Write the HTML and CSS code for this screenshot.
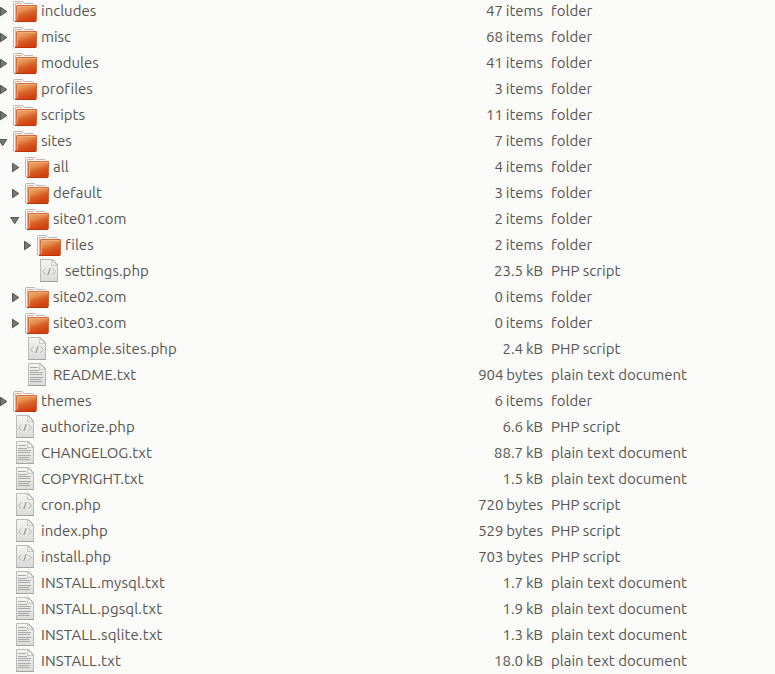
FILE: index.html
```
<!DOCTYPE html>
<html lang="en">
<head>
<meta charset="utf-8">
<title>Files</title>
<link rel="stylesheet" href="styles.css">
</head>
<body>
<svg class="defs" aria-hidden="true">
  <defs>
    <linearGradient id="orange" x1="0" y1="0" x2="0.45" y2="1">
      <stop offset="0" stop-color="#efb878"/><stop offset=".42" stop-color="#e38a4a"/>
      <stop offset=".62" stop-color="#d9622a"/><stop offset="1" stop-color="#d0400f"/>
    </linearGradient>
    <linearGradient id="paper" x1="0" y1="0" x2="0" y2="1">
      <stop offset="0" stop-color="#f4f4f3"/><stop offset="1" stop-color="#dadada"/>
    </linearGradient>
    <symbol id="folder" viewBox="0 0 24 26">
      <path d="M.5 23V4.500Q.5 3.500 1.500 3.500H9.500L11.500 5.500H19.500Q20.500 5.500 20.500 6.500V23Z" fill="#f7f6f5" stroke="#b9b9b7"/>
      <path d="M2.500 22V5.500H9" fill="none" stroke="#e9ae85"/>
      <path d="M3.500 22V8Q3.500 7.500 4 7.500H23.500V22Q23.500 23.500 22 23.500H2Q3.500 23 3.500 22Z" fill="url(#orange)" stroke="#d8693a"/>
      <path d="M4.500 21.500V8.500H22.500" fill="none" stroke="#f1b381" stroke-opacity=".75"/>
      <path d="M2 23.500H23" stroke="#bd3408"/>
    </symbol>
    <symbol id="page" viewBox="0 0 24 26">
      <path d="M3.500 1.500H15.500L20.500 6.500V23.500H3.500Z" fill="url(#paper)" stroke="#b9b9b8"/>
      <path d="M3 23.500H21" stroke="#a2a2a1"/>
      <path d="M14.500 1.500Q15.500 4 14.500 7.500Q18 6.500 20.500 7.500Z" fill="#fff" stroke="#bcbcba"/>
    </symbol>
    <symbol id="php" viewBox="0 0 24 26">
      <use href="#page"/>
      <path d="M8.500 10.500L5.500 13.500L8.500 16.500M15.500 10.500L18.500 13.500L15.500 16.500" fill="none" stroke="#b0b0af"/>
      <path d="M13.200 10L10.800 17" fill="none" stroke="#858584"/>
    </symbol>
    <symbol id="text" viewBox="0 0 24 26">
      <use href="#page"/>
      <path d="M5 5.500H13M5 8.500H14M5 10.500H18M5 12.500H17M5 15.500H18M5 17.500H16M5 19.500H17" stroke="#a9a9a8"/>
    </symbol>
    <symbol id="closed" viewBox="0 0 10 26"><path d="M2.500 9.300V17.700L8.800 13.500Z" fill="#777775" stroke="#555553"/></symbol>
    <symbol id="open" viewBox="0 0 10 26"><path d="M.700 11.500H8.700L4.700 17.700Z" fill="#777775" stroke="#555553"/></symbol>
  </defs>
</svg>
<main class="list" id="list"></main>
<script src="list.js"></script>
</body>
</html>
```
FILE: styles.css
```
body {
  margin: 0;
  overflow: hidden;
  background: #fafaf9;
  color: #575552;
  font: 15px/26px Ubuntu, "Noto Sans", sans-serif;
  font-variant-ligatures: none;
}
.defs { position: absolute; width: 0; height: 0; }
.list { margin-top: -2px; }
.row {
  display: grid;
  grid-template-columns: 443px 100px 1fr;
  height: 26px;
  white-space: nowrap;
}
.name { display: flex; }
.level-0 { padding-left: 13px; }
.level-1 { padding-left: 25px; }
.level-2 { padding-left: 37px; }
.arrow { flex: none; width: 10px; height: 26px; margin-left: -15px; margin-right: 5px; }
.icon { flex: none; width: 24px; height: 26px; margin-right: 4px; }
.label, .size, .type { display: block; }
.long { letter-spacing: .13px; }
.size { text-align: right; word-spacing: -.6px; }
.type { padding-left: 8px; }
```
FILE: list.js
```
// level, name, size, icon, arrow
const entries = [
  [0, "includes", "47 items", "folder", "closed"],
  [0, "misc", "68 items", "folder", "closed"],
  [0, "modules", "41 items", "folder", "closed"],
  [0, "profiles", "3 items", "folder", "closed"],
  [0, "scripts", "11 items", "folder", "closed"],
  [0, "sites", "7 items", "folder", "open"],
  [1, "all", "4 items", "folder", "closed"],
  [1, "default", "3 items", "folder", "closed"],
  [1, "site01.com", "2 items", "folder", "open"],
  [2, "files", "2 items", "folder", "closed"],
  [2, "settings.php", "23.5 kB", "php"],
  [1, "site02.com", "0 items", "folder", "closed"],
  [1, "site03.com", "0 items", "folder", "closed"],
  [1, "example.sites.php", "2.4 kB", "php"],
  [1, "README.txt", "904 bytes", "text"],
  [0, "themes", "6 items", "folder", "closed"],
  [0, "authorize.php", "6.6 kB", "php"],
  [0, "CHANGELOG.txt", "88.7 kB", "text"],
  [0, "COPYRIGHT.txt", "1.5 kB", "text"],
  [0, "cron.php", "720 bytes", "php"],
  [0, "index.php", "529 bytes", "php"],
  [0, "install.php", "703 bytes", "php"],
  [0, "INSTALL.mysql.txt", "1.7 kB", "text"],
  [0, "INSTALL.pgsql.txt", "1.9 kB", "text"],
  [0, "INSTALL.sqlite.txt", "1.3 kB", "text"],
  [0, "INSTALL.txt", "18.0 kB", "text"]
];
const types = { folder: "folder", php: "PHP script", text: "plain text document" };
document.getElementById("list").innerHTML = entries.map(([level, name, size, icon, arrow]) => `
  <div class="row">
    <div class="name level-${level}">
      ${arrow ? `<svg class="arrow"><use href="#${arrow}"/></svg>` : ""}
      <svg class="icon"><use href="#${icon}"/></svg>
      <span class="label${/^(INSTALL|example)/.test(name) ? " long" : ""}">${name}</span>
    </div>
    <span class="size">${size}</span>
    <span class="type">${types[icon]}</span>
  </div>`).join("");
```
